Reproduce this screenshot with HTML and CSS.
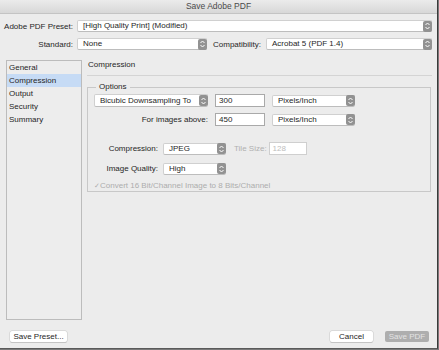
FILE: index.html
```html
<!DOCTYPE html>
<html lang="en">
<head>
    <meta charset="UTF-8">
    <meta name="viewport" content="width=device-width, initial-scale=1.0">
    <title>Save Adobe PDF</title>
    <link rel="stylesheet" href="styles.css">
</head>
<body>
    <div class="window">
        <div class="titlebar">Save Adobe PDF</div>

        <div class="top">
            <div class="row">
                <span class="lbl">Adobe PDF Preset:</span>
                <div class="select grow">[High Quality Print] (Modified)
                    <span class="stepper"><svg width="9" height="12" viewBox="0 0 9 12"><path d="M2.5 5 L4.5 3 L6.5 5 M2.5 7 L4.5 9 L6.5 7" fill="none" stroke="#fff" stroke-width="1"/></svg></span>
                </div>
            </div>
            <div class="row">
                <span class="lbl">Standard:</span>
                <div class="select std">None
                    <span class="stepper"><svg width="9" height="12" viewBox="0 0 9 12"><path d="M2.5 5 L4.5 3 L6.5 5 M2.5 7 L4.5 9 L6.5 7" fill="none" stroke="#fff" stroke-width="1"/></svg></span>
                </div>
                <span class="lbl-compat">Compatibility:</span>
                <div class="select grow">Acrobat 5 (PDF 1.4)
                    <span class="stepper"><svg width="9" height="12" viewBox="0 0 9 12"><path d="M2.5 5 L4.5 3 L6.5 5 M2.5 7 L4.5 9 L6.5 7" fill="none" stroke="#fff" stroke-width="1"/></svg></span>
                </div>
            </div>
        </div>

        <div class="main">
            <ul class="nav">
                <li>General</li>
                <li class="active">Compression</li>
                <li>Output</li>
                <li>Security</li>
                <li>Summary</li>
            </ul>

            <div class="panel">
                <div class="panel-title">Compression</div>
                <fieldset class="group">
                    <legend>Options</legend>

                    <div class="opt-row first">
                        <div class="select down">Bicubic Downsampling To
                            <span class="stepper"><svg width="9" height="12" viewBox="0 0 9 12"><path d="M2.5 5 L4.5 3 L6.5 5 M2.5 7 L4.5 9 L6.5 7" fill="none" stroke="#fff" stroke-width="1"/></svg></span>
                        </div>
                        <div class="input ppi">300</div>
                        <div class="select unit">Pixels/Inch
                            <span class="stepper"><svg width="9" height="12" viewBox="0 0 9 12"><path d="M2.5 5 L4.5 3 L6.5 5 M2.5 7 L4.5 9 L6.5 7" fill="none" stroke="#fff" stroke-width="1"/></svg></span>
                        </div>
                    </div>
                    <div class="opt-row">
                        <span class="lbl-above">For images above:</span>
                        <div class="input ppi">450</div>
                        <div class="select unit">Pixels/Inch
                            <span class="stepper"><svg width="9" height="12" viewBox="0 0 9 12"><path d="M2.5 5 L4.5 3 L6.5 5 M2.5 7 L4.5 9 L6.5 7" fill="none" stroke="#fff" stroke-width="1"/></svg></span>
                        </div>
                    </div>

                    <div class="opt-row comp">
                        <span class="lbl-short">Compression:</span>
                        <div class="select small">JPEG
                            <span class="stepper"><svg width="9" height="12" viewBox="0 0 9 12"><path d="M2.5 5 L4.5 3 L6.5 5 M2.5 7 L4.5 9 L6.5 7" fill="none" stroke="#fff" stroke-width="1"/></svg></span>
                        </div>
                        <span class="lbl-tile">Tile Size:</span>
                        <div class="input tile">128</div>
                    </div>
                    <div class="opt-row quality">
                        <span class="lbl-short">Image Quality:</span>
                        <div class="select small">High
                            <span class="stepper"><svg width="9" height="12" viewBox="0 0 9 12"><path d="M2.5 5 L4.5 3 L6.5 5 M2.5 7 L4.5 9 L6.5 7" fill="none" stroke="#fff" stroke-width="1"/></svg></span>
                        </div>
                    </div>

                    <div class="check-row">
                        <span class="check">✓</span>
                        <span>Convert 16 Bit/Channel Image to 8 Bits/Channel</span>
                    </div>
                </fieldset>
            </div>
        </div>

        <div class="footer">
            <button class="btn">Save Preset...</button>
            <span class="spacer"></span>
            <button class="btn cancel">Cancel</button>
            <button class="btn disabled">Save PDF</button>
        </div>
    </div>
</body>
</html>
```

FILE: styles.css
```css
body {
    margin: 0;
    background: #7a7a7a;
    font-family: "Liberation Sans", Arial, sans-serif;
    font-size: 8px;
    color: #262626;
}

.window {
    width: 438px;
    height: 349px;
    box-sizing: border-box;
    background: #ececec;
    border-right: 1px solid #3a3a3a;
    border-bottom: 1px solid #5a5a5a;
    display: flex;
    flex-direction: column;
}

.titlebar {
    height: 13px;
    line-height: 13px;
    text-align: center;
    font-size: 8.5px;
    color: #4a4a4a;
    background: linear-gradient(#ebebeb, #d8d8d8);
    border-bottom: 1px solid #c4c4c4;
}

/* top rows */
.top {
    padding: 6px 5px 0 0;
}

.row {
    display: flex;
    align-items: center;
    height: 12px;
    margin-bottom: 6px;
}

.lbl {
    width: 73px;
    text-align: right;
    margin-right: 4px;
    flex-shrink: 0;
}

.lbl-compat {
    margin: 0 5px 0 6px;
}

.select {
    position: relative;
    height: 12px;
    line-height: 12px;
    box-sizing: border-box;
    padding-left: 5px;
    background: #fff;
    border: 1px solid #d0d0d0;
    border-bottom-color: #bdbdbd;
    border-radius: 2px;
    white-space: nowrap;
    display: flex;
    align-items: center;
}

.select.grow {
    flex: 1;
}

.select.std {
    width: 130px;
}

.stepper {
    margin-left: auto;
    width: 9px;
    height: 11px;
    background: #929292;
    border-radius: 2px;
    display: flex;
    align-items: center;
    justify-content: center;
    margin-right: -1px;
}

/* main area */
.main {
    display: flex;
    height: 260px;
    margin-top: 4px;
    padding: 0 5px 0 6px;
}

.nav {
    list-style: none;
    margin: 0;
    padding: 0;
    width: 76px;
    box-sizing: border-box;
    border: 1px solid #bcbcbc;
    background: #ededed;
}

.nav li {
    height: 13px;
    line-height: 13px;
    padding-left: 2px;
}

.nav li.active {
    background: #c6dbf5;
}

.panel {
    flex: 1;
    margin-left: 5px;
}

.panel-title {
    height: 10px;
    line-height: 10px;
    padding: 0 0 5px 1px;
    border-bottom: 1px solid #d4d4d4;
}

.group {
    margin: 6px 1px 0 0;
    padding: 0 6px 3px 6px;
    border: 1px solid #c8c8c8;
    height: 110px;
    box-sizing: border-box;
}

.group legend {
    margin-left: 2px;
    padding: 0 3px;
    line-height: 10px;
}

.opt-row {
    display: flex;
    align-items: center;
    height: 13px;
    margin-top: 6px;
}

.opt-row.first {
    margin-top: 2px;
}

.opt-row.comp {
    margin-top: 16px;
}

.opt-row.quality {
    margin-top: 7px;
}

.select.down {
    width: 114px;
    height: 13px;
}

.input {
    height: 13px;
    line-height: 11px;
    box-sizing: border-box;
    padding-left: 3px;
    background: #fff;
    border: 1px solid #a9a9a9;
}

.input.ppi {
    width: 50px;
    margin-left: 7px;
}

.select.unit {
    width: 83px;
    margin-left: 7px;
}

.lbl-above {
    width: 114px;
    text-align: right;
}

.lbl-short {
    width: 64px;
    text-align: right;
    margin-right: 5px;
}

.select.small {
    width: 63px;
}

.lbl-tile {
    color: #b0b0b0;
    margin: 0 2px 0 8px;
}

.input.tile {
    width: 38px;
    border-color: #cfcfcf;
    color: #bdbdbd;
}

.check-row {
    display: flex;
    align-items: center;
    margin-top: 6px;
    color: #adadad;
}

.check {
    width: 6px;
    font-size: 7px;
    margin-right: 0;
}

/* footer */
.footer {
    display: flex;
    align-items: center;
    padding: 11px 8px 0 10px;
}

.spacer {
    flex: 1;
}

.btn {
    font-family: "Liberation Sans", Arial, sans-serif;
    font-size: 8px;
    height: 11px;
    padding: 0;
    line-height: 11px;
    color: #262626;
    background: #fff;
    border: none;
    border-radius: 2px;
    box-shadow: 0 0 0 0.5px #c8c8c8, 0 1px 0 #c0c0c0;
}

.btn:first-child {
    width: 57px;
}

.btn.cancel {
    width: 43px;
}

.btn.disabled {
    width: 44px;
    margin-left: 12px;
    background: #aeaeae;
    color: #e4e4e4;
    box-shadow: none;
}
```
